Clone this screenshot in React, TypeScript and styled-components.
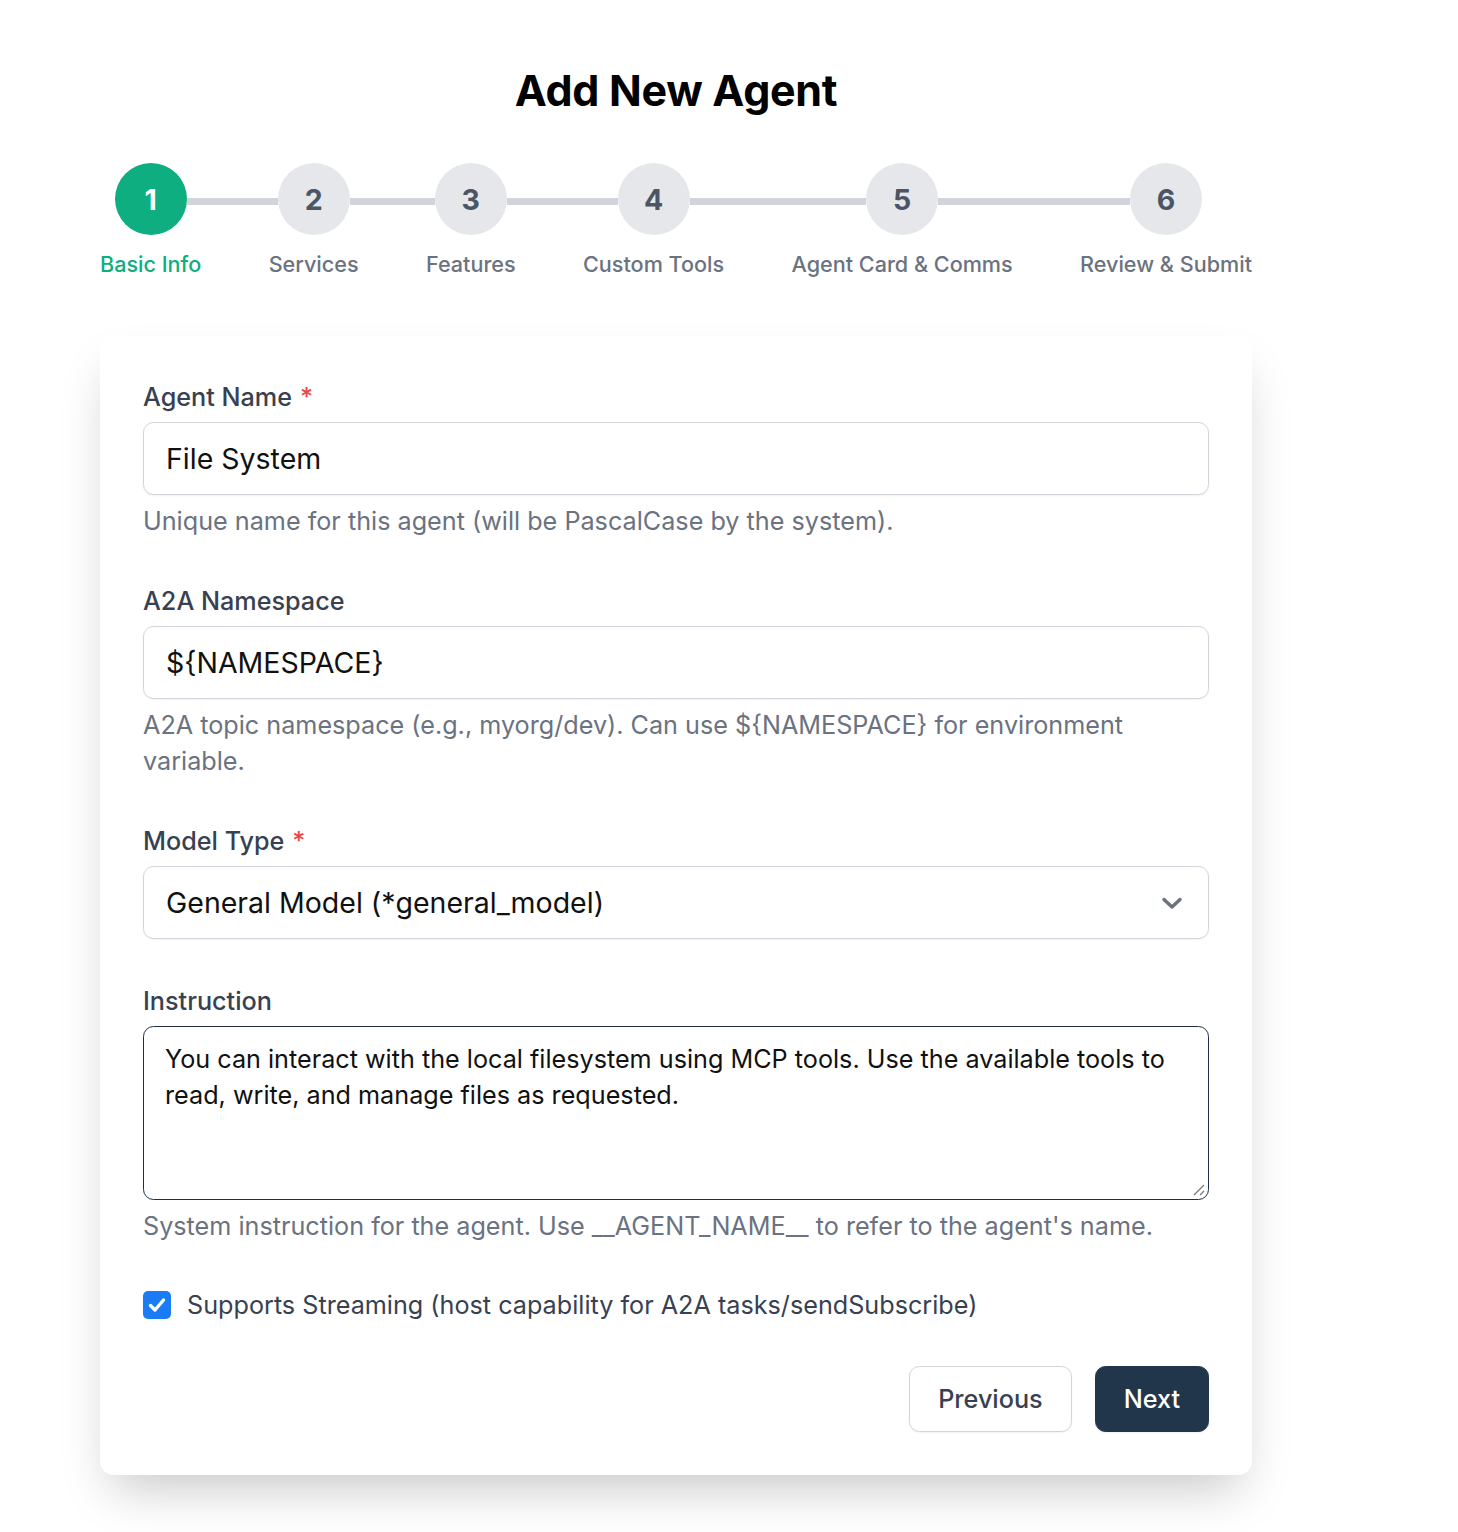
import React from "react";
import styled, { createGlobalStyle } from "styled-components";

const GlobalStyle = createGlobalStyle`
  html, body {
    margin: 0;
    padding: 0;
    background: #ffffff;
    font-family: Inter, "Noto Sans", "Liberation Sans", sans-serif;
    color: #111827;
  }
  * { box-sizing: border-box; }
`;

const Page = styled.div`
  width: 1152px;
  margin-left: 100px;
  padding-top: 65px;
  padding-bottom: 57px;
`;

const Title = styled.h1`
  margin: 0;
  text-align: center;
  font-size: 43px;
  line-height: 50px;
  font-weight: 700;
  color: #000000;
  letter-spacing: -0.3px;
`;

const Stepper = styled.div`
  display: flex;
  align-items: flex-start;
  margin-top: 48px;
`;

const Step = styled.div`
  display: flex;
  flex-direction: column;
  align-items: stretch;
`;

const StepHead = styled.div`
  display: flex;
  align-items: flex-start;
`;

const Line = styled.div<{ $hidden?: boolean }>`
  flex: 1;
  min-width: 0;
  height: 7px;
  margin-top: 35px;
  background: ${(p) => (p.$hidden ? "transparent" : "#d1d5db")};
`;

const Connector = styled.div`
  flex: 1;
  height: 7px;
  margin-top: 35px;
  background: #d1d5db;
`;

const Circle = styled.div<{ $active?: boolean }>`
  flex: none;
  width: 72px;
  height: 72px;
  border-radius: 50%;
  display: flex;
  align-items: center;
  justify-content: center;
  font-size: 28.5px;
  font-weight: 700;
  background: ${(p) => (p.$active ? "#0eae80" : "#e5e7eb")};
  color: ${(p) => (p.$active ? "#ffffff" : "#4b5563")};
`;

const StepLabel = styled.div<{ $active?: boolean }>`
  margin-top: 15px;
  font-size: 21.6px;
  line-height: 29px;
  font-weight: 500;
  white-space: nowrap;
  text-align: center;
  color: ${(p) => (p.$active ? "#0eae80" : "#6b7280")};
`;

const Card = styled.div`
  margin-top: 57px;
  background: #ffffff;
  border-radius: 14px;
  padding: 43px 43px 43px 43px;
  box-shadow: 0 25px 50px -12px rgba(0, 0, 0, 0.22);
  display: flex;
  flex-direction: column;
  gap: 44px;
`;

const Field = styled.div`
  display: flex;
  flex-direction: column;
`;

const Label = styled.label`
  font-size: 25.2px;
  line-height: 36px;
  font-weight: 500;
  color: #374151;
  margin-bottom: 7px;
`;

const Required = styled.span`
  color: #ef4444;
  margin-left: 8px;
`;

const TextInput = styled.div`
  height: 73px;
  border: 1px solid #d1d5db;
  border-radius: 10.5px;
  padding: 0 22px;
  display: flex;
  align-items: center;
  justify-content: space-between;
  font-size: 28.5px;
  color: #111111;
  box-shadow: 0 1px 2px rgba(0, 0, 0, 0.05);
  background: #ffffff;
`;

const Chevron = styled.svg`
  width: 24px;
  height: 24px;
  margin-right: 2px;
  color: #6b7280;
`;

const TextArea = styled.div`
  height: 174px;
  border: 1.5px solid #1e2f45;
  border-radius: 10.5px;
  padding: 13.5px 21px;
  font-size: 25.2px;
  line-height: 36px;
  color: #111111;
  position: relative;
  background: #ffffff;
`;

const Grip = styled.svg`
  position: absolute;
  right: 3px;
  bottom: 3px;
  width: 14px;
  height: 14px;
`;

const Help = styled.p`
  margin: 8px 0 0 0;
  font-size: 25.2px;
  line-height: 36px;
  color: #6b7280;
`;

const CheckRow = styled.div`
  display: flex;
  align-items: center;
  gap: 16px;
  font-size: 25.2px;
  line-height: 36px;
  color: #374151;
  margin-top: -1px;
`;

const CheckBox = styled.span`
  width: 28px;
  height: 28px;
  border-radius: 5px;
  background: #1a7cf5;
  display: flex;
  align-items: center;
  justify-content: center;
  flex: none;
`;

const Actions = styled.div`
  display: flex;
  justify-content: flex-end;
  gap: 23px;
  margin-top: -1px;
`;

const Button = styled.button<{ $primary?: boolean }>`
  height: 66px;
  padding: 0 28px;
  border-radius: 10.5px;
  font-family: inherit;
  font-size: 25.2px;
  font-weight: 500;
  cursor: pointer;
  border: 1px solid ${(p) => (p.$primary ? "#22364b" : "#d1d5db")};
  background: ${(p) => (p.$primary ? "#22364b" : "#ffffff")};
  color: ${(p) => (p.$primary ? "#ffffff" : "#374151")};
  box-shadow: 0 1px 2px rgba(0, 0, 0, 0.05);
`;

const steps = [
  "Basic Info",
  "Services",
  "Features",
  "Custom Tools",
  "Agent Card & Comms",
  "Review & Submit",
];

const namespaceHelp =
  "A2A topic namespace (e.g., myorg/dev). Can use ${NAMESPACE} for environment variable.";

export default function App() {
  return (
    <>
      <GlobalStyle />
      <Page>
        <Title>Add New Agent</Title>
        <Stepper>
          {steps.map((s, i) => (
            <React.Fragment key={s}>
              {i > 0 && <Connector />}
              <Step>
                <StepHead>
                  <Line $hidden={i === 0} />
                  <Circle $active={i === 0}>{i + 1}</Circle>
                  <Line $hidden={i === steps.length - 1} />
                </StepHead>
                <StepLabel $active={i === 0}>{s}</StepLabel>
              </Step>
            </React.Fragment>
          ))}
        </Stepper>

        <Card>
          <Field>
            <Label>
              Agent Name<Required>*</Required>
            </Label>
            <TextInput>File System</TextInput>
            <Help>Unique name for this agent (will be PascalCase by the system).</Help>
          </Field>

          <Field>
            <Label>A2A Namespace</Label>
            <TextInput>{"${NAMESPACE}"}</TextInput>
            <Help>{namespaceHelp}</Help>
          </Field>

          <Field>
            <Label>
              Model Type<Required>*</Required>
            </Label>
            <TextInput>
              <span>General Model (*general_model)</span>
              <Chevron viewBox="0 0 24 24" fill="none">
                <path
                  d="M4 8.5l8 7.5 8-7.5"
                  stroke="currentColor"
                  strokeWidth="3.5"
                  strokeLinecap="round"
                  strokeLinejoin="round"
                />
              </Chevron>
            </TextInput>
          </Field>

          <Field>
            <Label>Instruction</Label>
            <TextArea>
              You can interact with the local filesystem using MCP tools. Use the available tools to
              read, write, and manage files as requested.
              <Grip viewBox="0 0 14 14">
                <path d="M13 3L3 13M13 9L9 13" stroke="#777" strokeWidth="1.2" />
              </Grip>
            </TextArea>
            <Help>System instruction for the agent. Use __AGENT_NAME__ to refer to the agent's name.</Help>
          </Field>

          <CheckRow>
            <CheckBox>
              <svg width="22" height="22" viewBox="0 0 22 22" fill="none">
                <path
                  d="M4.5 11.5l4.5 4.5 8.5-10"
                  stroke="#ffffff"
                  strokeWidth="3.4"
                  strokeLinecap="round"
                  strokeLinejoin="round"
                />
              </svg>
            </CheckBox>
            Supports Streaming (host capability for A2A tasks/sendSubscribe)
          </CheckRow>

          <Actions>
            <Button>Previous</Button>
            <Button $primary>Next</Button>
          </Actions>
        </Card>
      </Page>
    </>
  );
}
